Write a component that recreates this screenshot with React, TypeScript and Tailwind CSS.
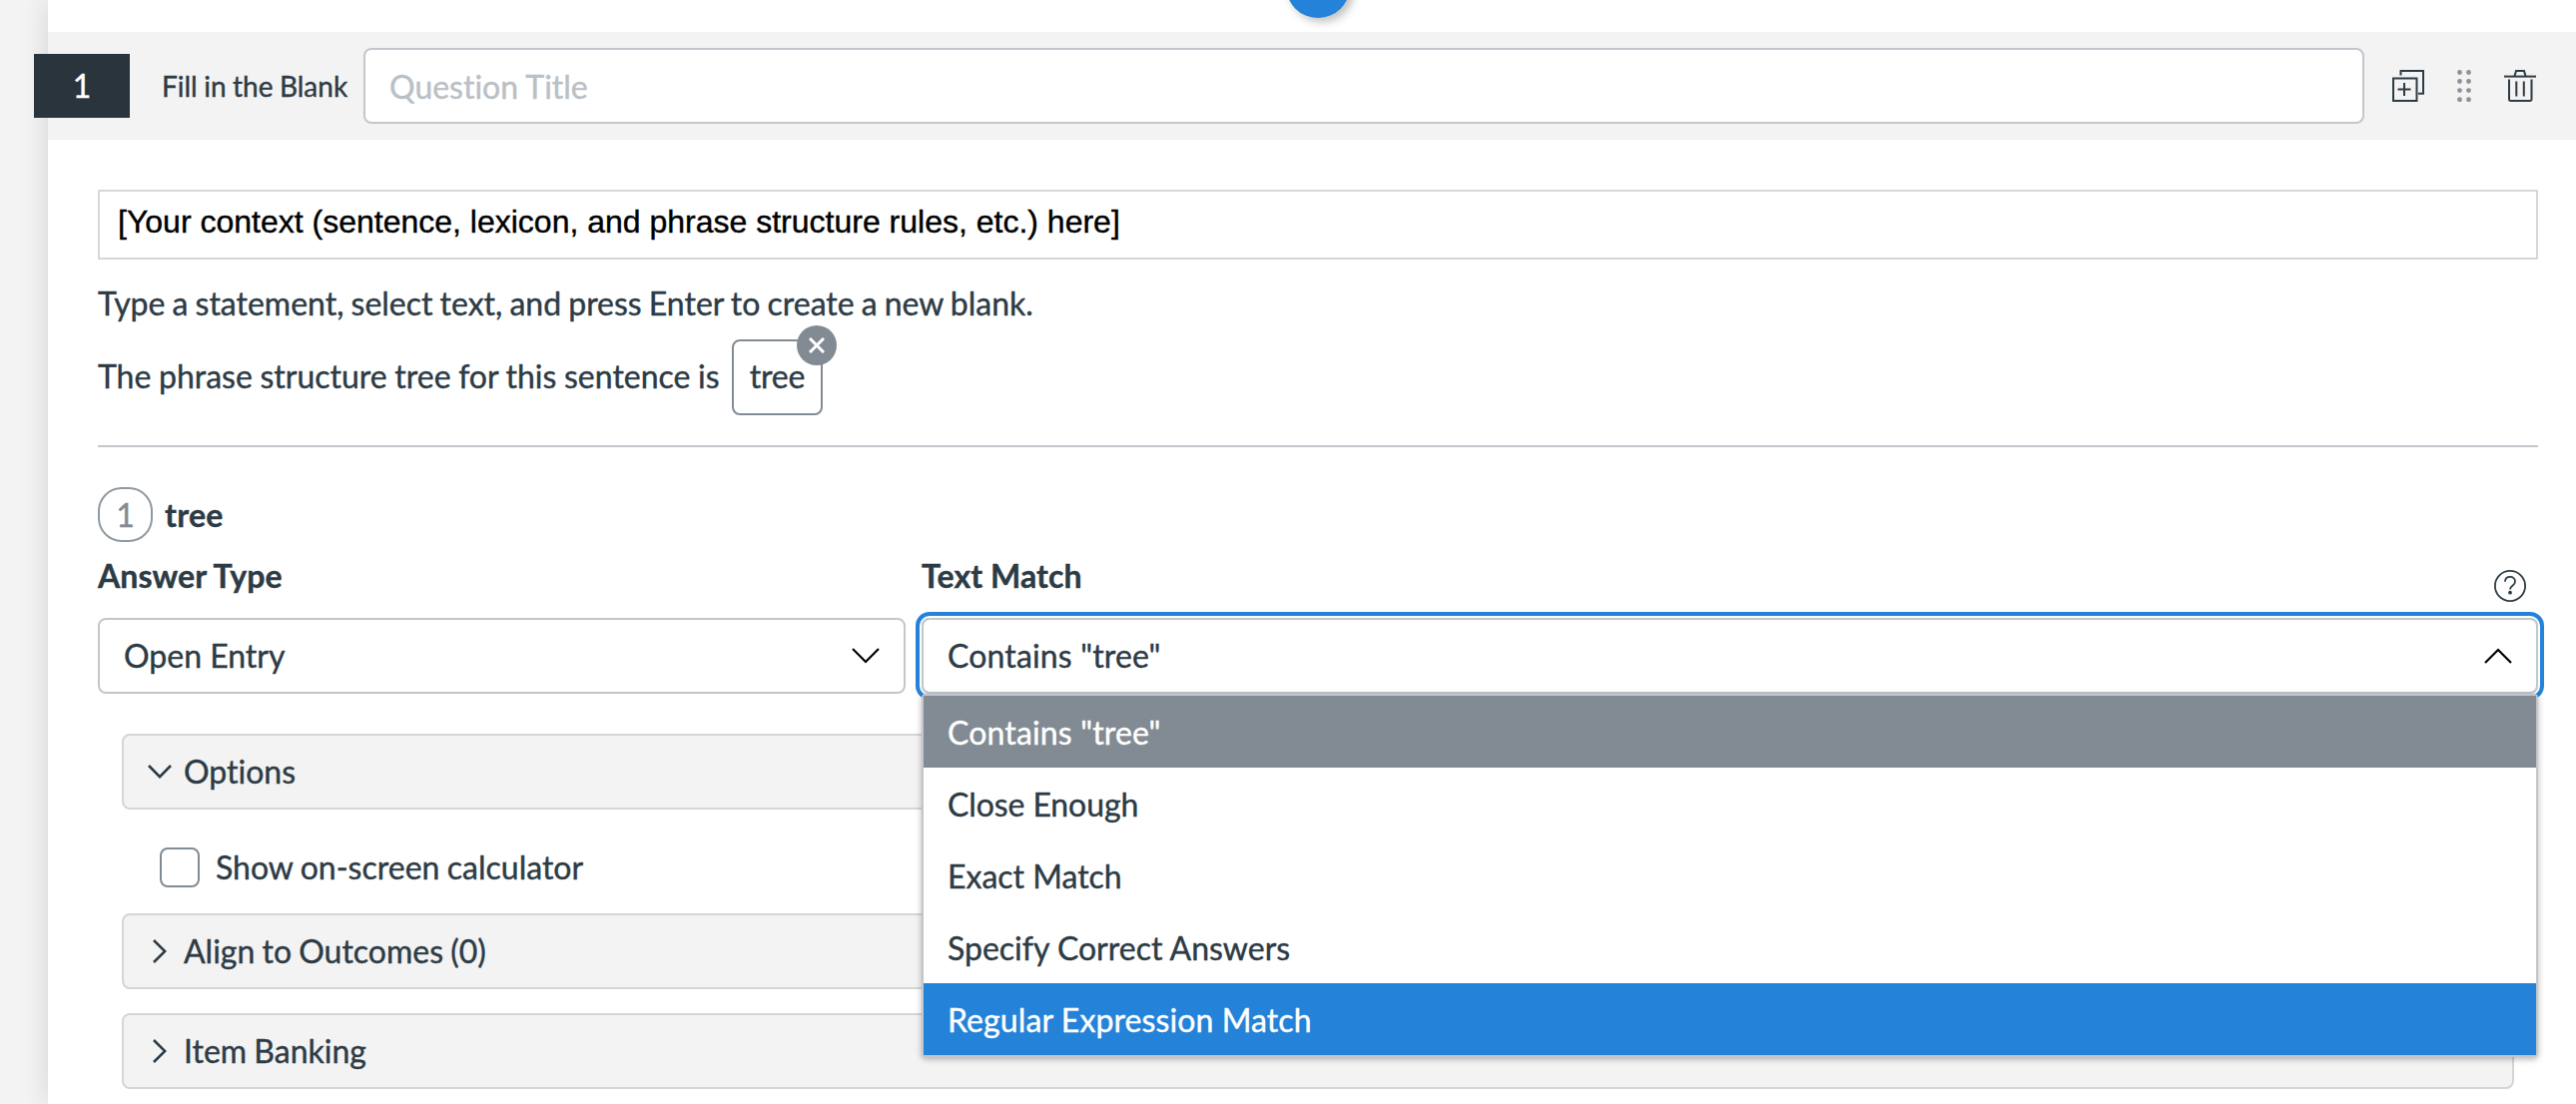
import React from "react";

function DuplicateIcon() {
  return (
    <svg width="32" height="32" viewBox="0 0 32 32" fill="none" stroke="#2d3b45" strokeWidth="2">
      <path d="M1 8.5h23.5V31H1z" />
      <path d="M8.5 5.5V1H31v22.8h-5" />
      <path d="M5.5 19.5h13M12 13v13" />
    </svg>
  );
}

function DragIcon() {
  return (
    <svg width="14" height="32" viewBox="0 0 14 32" fill="#8b9198">
      {[2.5, 11.5].map((x) =>
        [2.5, 11.5, 20.6, 29.7].map((y) => <circle key={`${x}-${y}`} cx={x} cy={y} r="2.4" />),
      )}
    </svg>
  );
}

function TrashIcon() {
  return (
    <svg width="32" height="32" viewBox="0 0 32 32" fill="none" stroke="#2d3b45" strokeWidth="2">
      <path d="M0 6.6h32" />
      <path d="M10.5 6.2L12 1h8l1.5 5.2" />
      <path d="M5 9.5V29.5a1.5 1.5 0 0 0 1.5 1.5h19.5a1.5 1.5 0 0 0 1.5-1.5V9.5" />
      <path d="M12.3 11.5v15M19.8 11.5v15" />
    </svg>
  );
}

function HelpIcon() {
  return (
    <svg width="32" height="32" viewBox="0 0 32 32" fill="none" stroke="#2d3b45" strokeWidth="1.8">
      <circle cx="16" cy="16" r="15.1" />
      <path d="M11 11.8C11 8.6 13.2 6.8 16 6.8s5 1.8 5 4.6c0 2.2-1.2 3.3-2.6 4.300C16.8 16.9 16 17.7 16 19.4" />
      <circle cx="16" cy="22.7" r="1.9" fill="#2d3b45" stroke="none" />
    </svg>
  );
}

function Chevron({ d, w, h, color, sw }: { d: string; w: number; h: number; color: string; sw: number }) {
  return (
    <svg width={w} height={h} viewBox={`0 0 ${w} ${h}`} fill="none" stroke={color} strokeWidth={sw}>
      <path d={d} />
    </svg>
  );
}

function Section({ label, open }: { label: string; open?: boolean }) {
  return (
    <div className="flex h-[76px] items-center rounded-[8px] border-2 border-[#d4d5d6] bg-[#f3f3f3] pl-6">
      <div className="mr-3 flex w-6 justify-center">
        {open ? (
          <Chevron d="M1 1l11 11.2L23 1" w={24} h={14} color="#2d3b45" sw={2.6} />
        ) : (
          <Chevron d="M1 1l11.2 11L1 23" w={14} h={24} color="#2d3b45" sw={2.6} />
        )}
      </div>
      <span className="[word-spacing:-1px]">{label}</span>
    </div>
  );
}

const options = ['Contains "tree"', "Close Enough", "Exact Match", "Specify Correct Answers", "Regular Expression Match"];

function optionClass(i: number) {
  if (i === 0) return "flex h-[72px] items-center bg-[#828b93] pl-6 pt-[2px] text-white tracking-[0.15px]";
  if (i === 1) return "flex h-[72px] items-center bg-white pl-6 pt-[2px] tracking-[-0.1px]";
  if (i === options.length - 1) return "flex h-[72px] items-center bg-[#2482d9] pl-6 pt-[2px] text-white tracking-[0.1px]";
  return "flex h-[72px] items-center bg-white pl-6 pt-[2px]";
}

export default function App() {
  return (
    <div className="h-[1106px] w-[2580px] overflow-hidden bg-[#f3f3f3] pl-12 font-['Lato',sans-serif] text-[32px] leading-[48px] text-[#2d3b45] [font-variant-ligatures:none] [-webkit-text-stroke:0.4px]">
      <div className="relative h-full bg-white shadow-[0_0_24px_rgba(0,0,0,0.13)]">
        <div className="absolute -top-[46px] left-[1240px] size-16 rounded-full bg-[#2482d9] shadow-[4px_4px_8px_rgba(0,0,0,0.25)]" />
        <div className="h-8" />
        <header className="flex h-[108px] items-center bg-[#f3f3f3] pr-10">
          <div className="-ml-[14px] flex h-16 w-24 items-center justify-center bg-[#2a343d] text-white">1</div>
          <div className="ml-8 w-[202px] whitespace-nowrap text-[28px] [word-spacing:-0.7px]">Fill in the Blank</div>
          <div className="flex h-[76px] w-[2004px] items-center rounded-[8px] border-2 border-[#c1c7cc] bg-white pl-6 pt-px text-[#b9c0c6]">
            Question Title
          </div>
          <div className="ml-7 flex items-center">
            <DuplicateIcon />
            <div className="ml-[33px] mr-[33px]">
              <DragIcon />
            </div>
            <TrashIcon />
          </div>
        </header>

        <main className="pl-[50px] pr-[38px] pt-[50px]">
          <div className="h-[70px] border-2 border-[#d7d7d7] pl-[18px] pt-[6px] font-['Liberation_Sans',Arial,sans-serif] text-black">
            [Your context (sentence, lexicon, and phrase structure rules, etc.) here]
          </div>
          <p className="mt-5 [word-spacing:-1.1px]">Type a statement, select text, and press Enter to create a new blank.</p>
          <div className="mt-3 flex h-[76px] items-center">
            <span className="w-[624px] whitespace-nowrap pb-[3px] [word-spacing:-0.6px]">The phrase structure tree for this sentence is</span>
            <div className="relative ml-[11px] flex h-[76px] w-[91px] items-center justify-center rounded-[8px] border-2 border-[#828b93] pb-[3px] tracking-[-0.2px]">
              tree
              <div className="absolute -right-4 -top-4 flex size-10 items-center justify-center rounded-full bg-[#828b93]">
                <svg width="16" height="16" viewBox="0 0 16 16" stroke="white" strokeWidth="3">
                  <path d="M1 1l14 14M15 1L1 15" />
                </svg>
              </div>
            </div>
          </div>
          <div className="mt-[30px] h-0.5 bg-[#c1c7cc]" />

          <div className="mt-10 flex h-[55px] items-center">
            <div className="flex size-[55px] items-center justify-center rounded-[24px] border-2 border-[#919aa1] text-[#828b93]">1</div>
            <div className="ml-3 font-bold tracking-[0.3px]">tree</div>
          </div>

          <div className="mt-[10px] grid grid-cols-[809px_1fr] gap-x-4">
            <div>
              <div className="h-[66px] font-bold tracking-[0.1px]">Answer Type</div>
              <div className="flex h-[76px] items-center justify-between rounded-[8px] border-2 border-[#c1c7cc] pl-6 pr-6">
                Open Entry
                <Chevron d="M1 1l13 13L27 1" w={28} h={16} color="#000" sw={2.2} />
              </div>
            </div>
            <div>
              <div className="flex h-[66px] justify-between pr-3 font-bold tracking-[0.1px]">
                Text Match
                <div className="pt-[18px]">
                  <HelpIcon />
                </div>
              </div>
              <div className="relative">
                <div className="flex h-[76px] items-center justify-between rounded-[8px] border-2 border-[#c1c7cc] pl-6 pr-6 tracking-[0.15px] shadow-[0_0_0_2px_#fff,0_0_0_6px_#2482d9]">
                  Contains "tree"
                  <Chevron d="M1 15L14 2l13 13" w={28} h={16} color="#000" sw={2.2} />
                </div>
                <div className="absolute left-0 right-0 top-[76px] z-10 rounded-[4px] border-2 border-[#c1c7cc] bg-white shadow-[0_2px_6px_rgba(0,0,0,0.3)]">
                  {options.map((o, i) => (
                    <div key={o} className={optionClass(i)}>
                      {o}
                    </div>
                  ))}
                </div>
              </div>
            </div>
          </div>

          <div className="px-6 pt-10">
            <Section label="Options" open />
            <div className="flex items-center pl-[38px] pt-[38px]">
              <div className="size-10 rounded-[8px] border-2 border-[#828b93]" />
              <span className="-my-1 ml-4 [word-spacing:-0.8px]">Show on-screen calculator</span>
            </div>
            <div className="mt-[26px] flex flex-col gap-6">
              <Section label="Align to Outcomes (0)" />
              <Section label="Item Banking" />
            </div>
          </div>
        </main>
      </div>
    </div>
  );
}
